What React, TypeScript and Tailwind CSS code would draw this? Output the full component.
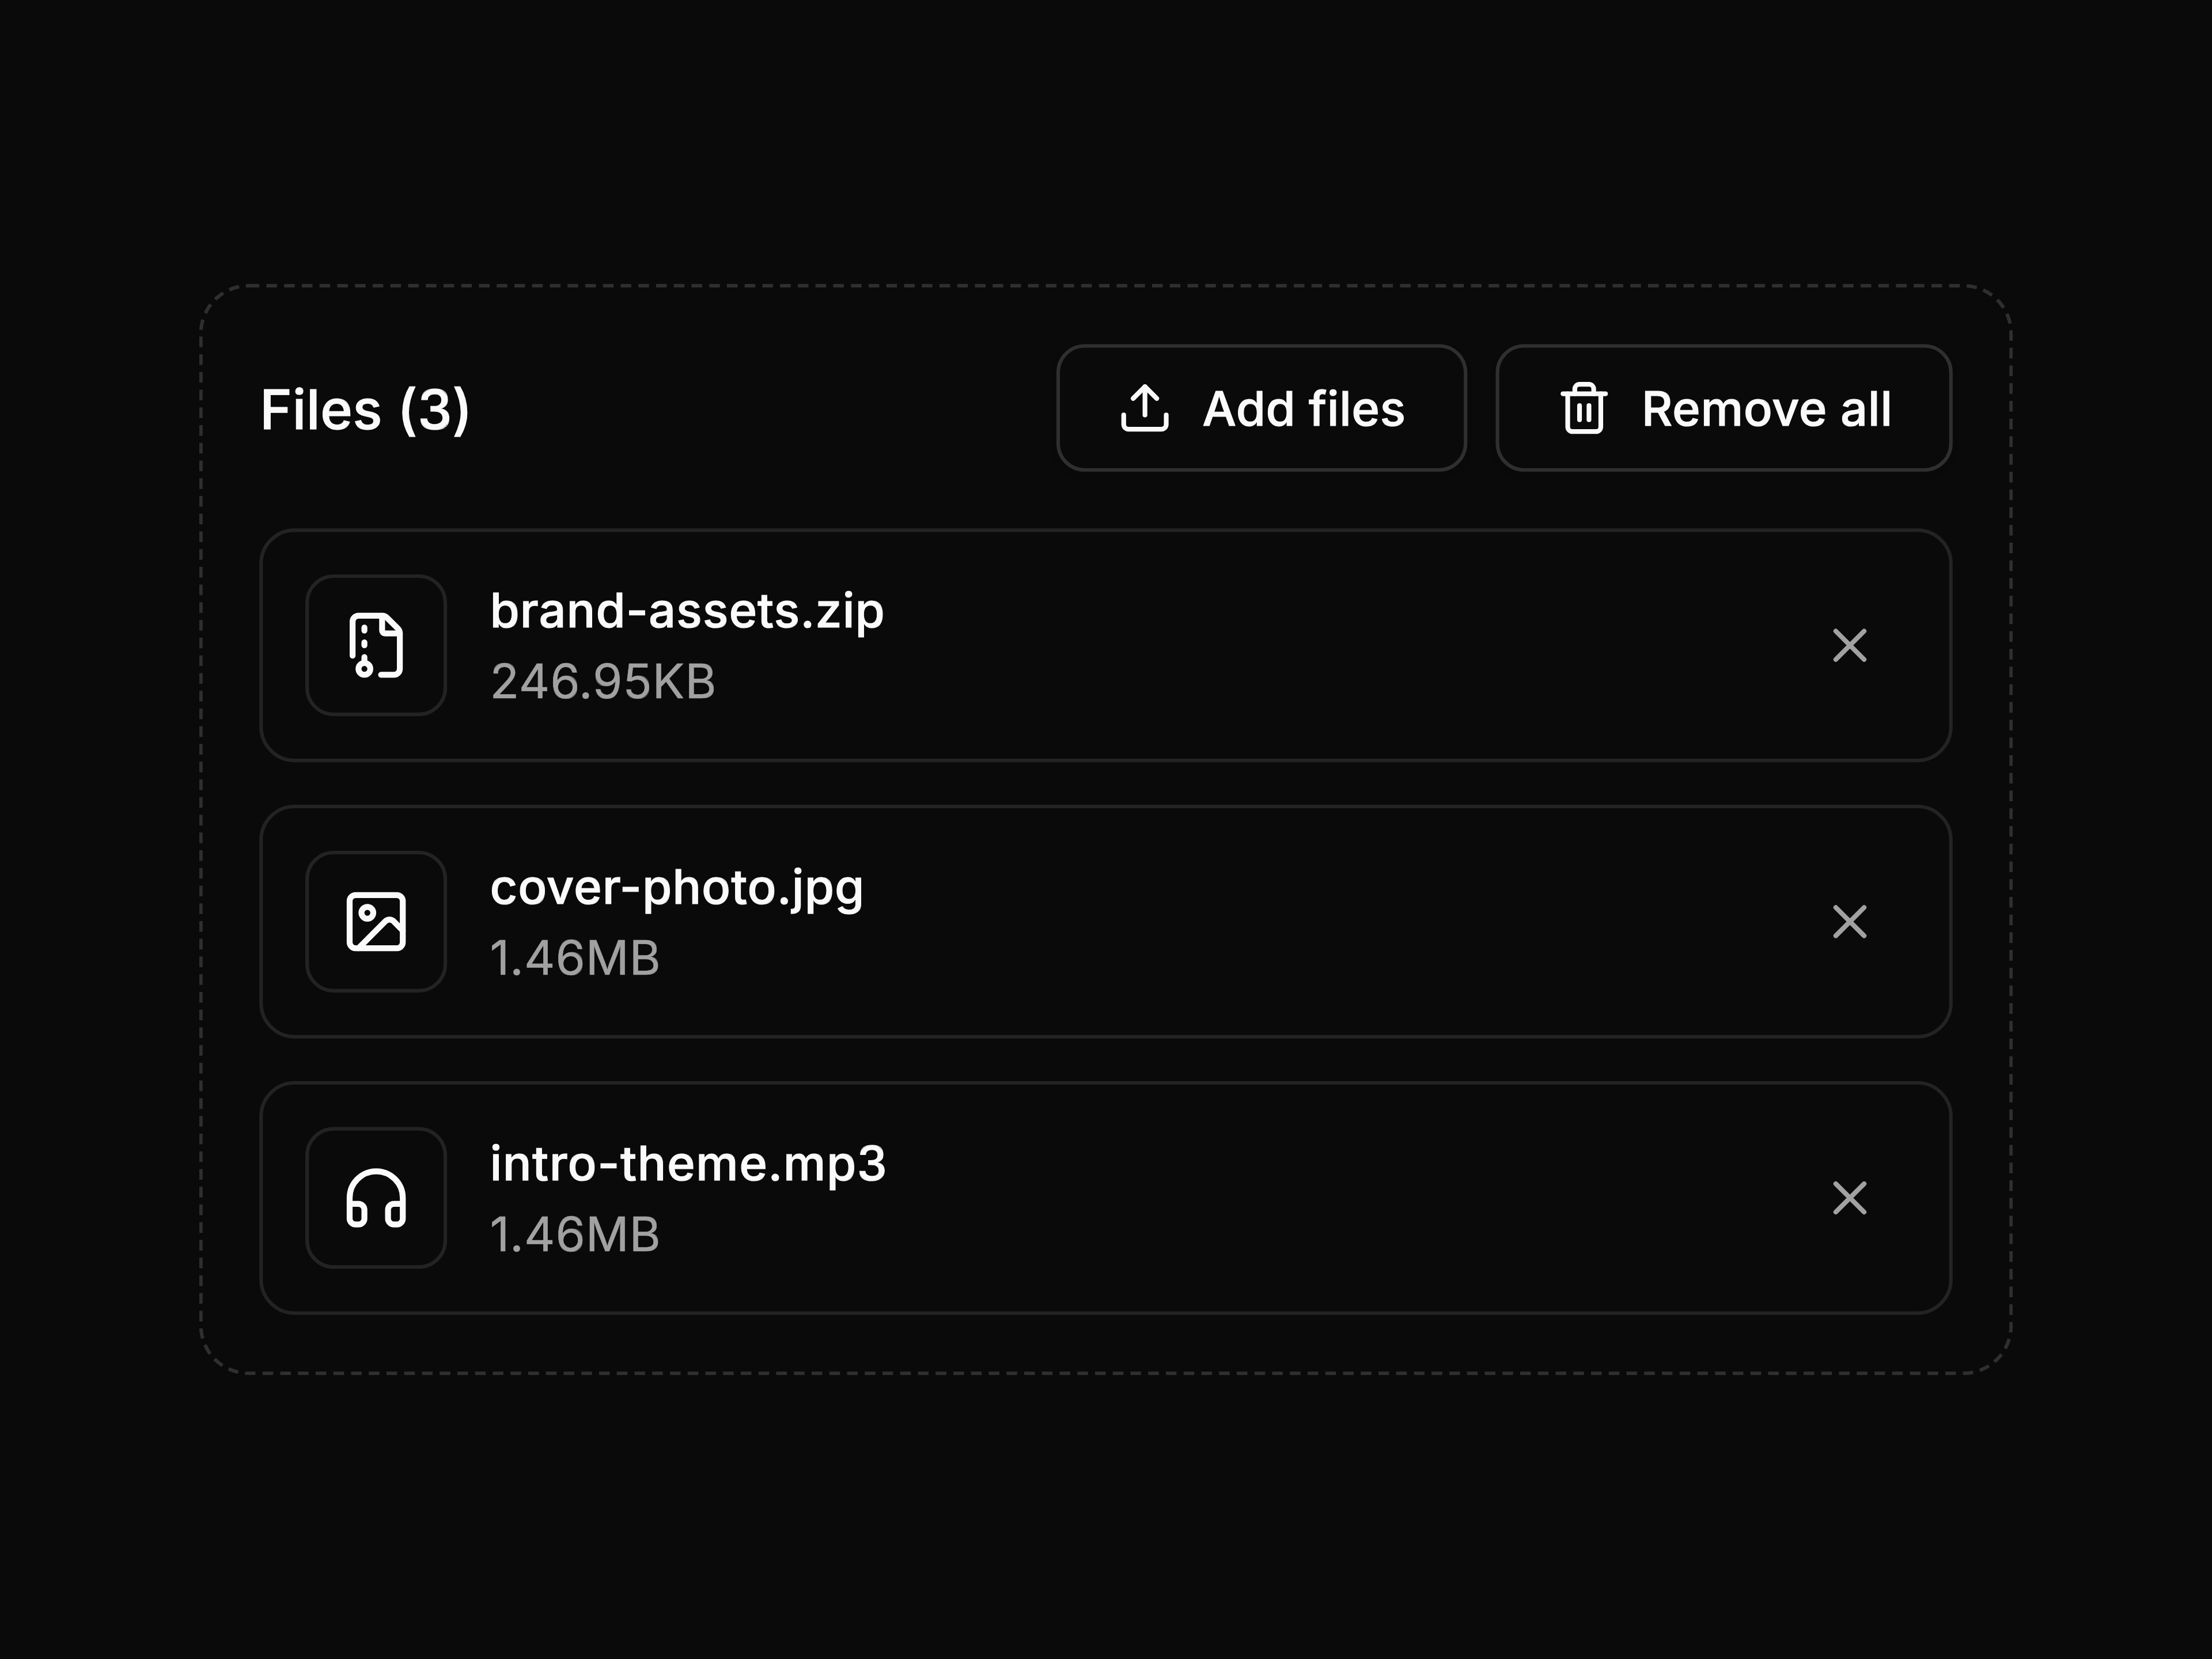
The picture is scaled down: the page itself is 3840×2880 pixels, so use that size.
import {
  FileArchiveIcon,
  HeadphonesIcon,
  ImageIcon,
  Trash2Icon,
  UploadIcon,
  XIcon,
  type LucideIcon,
} from "lucide-react";
import { clsx } from "clsx";

interface FileItem {
  id: string;
  name: string;
  size: string;
  icon: LucideIcon;
  nameClassName: string;
}

const files: FileItem[] = [
  {
    id: "brand-assets.zip",
    name: "brand-assets.zip",
    size: "246.95KB",
    icon: FileArchiveIcon,
    nameClassName: "tracking-[0.153px]",
  },
  {
    id: "cover-photo.jpg",
    name: "cover-photo.jpg",
    size: "1.46MB",
    icon: ImageIcon,
    nameClassName: "tracking-[0.155px]",
  },
  {
    id: "intro-theme.mp3",
    name: "intro-theme.mp3",
    size: "1.46MB",
    icon: HeadphonesIcon,
    nameClassName: "tracking-[0.223px]",
  },
];

interface OutlineButtonProps {
  icon: LucideIcon;
  className?: string;
  children: React.ReactNode;
}

function OutlineButton({ icon: Icon, className, children }: OutlineButtonProps) {
  return (
    <button
      className={clsx(
        "flex h-9 shrink-0 items-center gap-[8.2px] rounded-[8px] border border-[#2f2f2f] pl-4 text-[13.5px] font-medium whitespace-nowrap shadow-xs [-webkit-text-stroke-width:0.18px]",
        className
      )}
    >
      <Icon className="size-4 shrink-0" aria-hidden="true" />
      {children}
    </button>
  );
}

function FileRow({ file }: { file: FileItem }) {
  const Icon = file.icon;

  return (
    <div className="flex items-center justify-between rounded-[10px] border border-[#222423] p-3">
      <div className="flex items-center gap-3">
        <div className="flex size-10 shrink-0 items-center justify-center rounded-[8px] border border-[#222423]">
          <Icon className="size-5" aria-hidden="true" />
        </div>
        <div className="flex flex-col pl-[0.1px] text-[13.5px] leading-5 whitespace-nowrap">
          <p
            className={clsx(
              "font-medium [-webkit-text-stroke-width:0.18px]",
              file.nameClassName
            )}
          >
            {file.name}
          </p>
          <p className="tracking-[0.14px] text-[#a1a1a1] [-webkit-text-stroke-width:0.1px]">
            {file.size}
          </p>
        </div>
      </div>
      <button
        className="flex size-8 items-center justify-center text-[#a1a1a1]"
        aria-label="Remove file"
      >
        <XIcon className="size-4" aria-hidden="true" />
      </button>
    </div>
  );
}

export default function App() {
  return (
    <div className="flex h-[2880px] w-[3840px] items-center justify-center overflow-hidden bg-[#0a0a0a] font-['Inter',sans-serif] text-[#fafafa]">
      <div className="flex w-lg shrink-0 scale-[6.15] flex-col gap-4 rounded-[14px] border border-dashed border-[#2f2f2f] p-4">
        <div className="flex items-center justify-between">
          <h3 className="pt-px pl-[0.15px] text-[15.5px] leading-6 font-medium tracking-[0.04px] [-webkit-text-stroke-width:0.18px]">
            Files ({files.length})
          </h3>
          <div className="flex gap-2">
            <OutlineButton icon={UploadIcon} className="w-[116px] tracking-[0.06px]">
              Add files
            </OutlineButton>
            <OutlineButton icon={Trash2Icon} className="w-[129px] tracking-[0.1px]">
              Remove all
            </OutlineButton>
          </div>
        </div>

        <div className="flex flex-col gap-3">
          {files.map((file) => (
            <FileRow key={file.id} file={file} />
          ))}
        </div>
      </div>
    </div>
  );
}
